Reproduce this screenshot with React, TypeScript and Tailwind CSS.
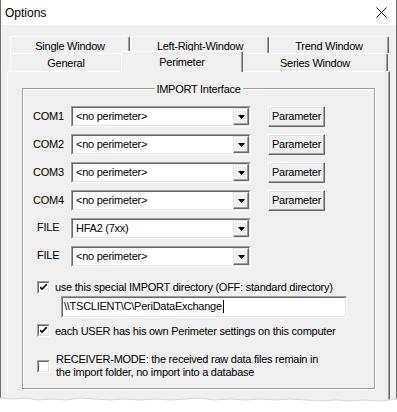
import React from "react"

const ui = "font-['Liberation_Sans',Arial,sans-serif] text-[11px] tracking-[-0.25px] text-black"

function Combo({ value }: { value: string }) {
  return (
    <div className="flex h-[21px] w-[180px] border border-t-[#a0a0a0] border-l-[#a0a0a0] border-r-white border-b-white">
      <div className="flex flex-1 items-stretch border border-t-[#696969] border-l-[#696969] border-r-[#e3e3e3] border-b-[#e3e3e3] bg-white">
        <span className="flex flex-1 items-center pl-[3px] whitespace-nowrap">{value}</span>
        <div className="flex w-[16px] items-center justify-center border border-t-[#e3e3e3] border-l-[#e3e3e3] border-r-[#696969] border-b-[#696969] bg-[#f0f0f0] shadow-[inset_-1px_-1px_0_#a0a0a0,inset_1px_1px_0_white]">
          <svg width="7" height="4" viewBox="0 0 7 4">
            <polygon points="0,0 7,0 3.5,4" fill="black" />
          </svg>
        </div>
      </div>
    </div>
  )
}

function ParamButton() {
  return (
    <div className="ml-[17px] flex h-[21px] w-[57px] items-center justify-center border border-t-white border-l-white border-r-[#696969] border-b-[#696969] bg-[#f0f0f0] shadow-[inset_-1px_-1px_0_#a0a0a0,inset_1px_1px_0_#e3e3e3]">
      Parameter
    </div>
  )
}

function CheckBox({ checked }: { checked: boolean }) {
  return (
    <div className="flex h-[13px] w-[13px] shrink-0 border border-t-[#a0a0a0] border-l-[#a0a0a0] border-r-white border-b-white">
      <div className="flex flex-1 items-center justify-center border border-t-[#696969] border-l-[#696969] border-r-[#e3e3e3] border-b-[#e3e3e3] bg-white">
        {checked && (
          <svg width="7" height="7" viewBox="0 0 7 7">
            <polyline points="0,3 2,5 7,0" fill="none" stroke="black" strokeWidth="1.6" />
          </svg>
        )}
      </div>
    </div>
  )
}

function ComRow({ label }: { label: string }) {
  return (
    <div className="flex h-[21px] items-center">
      <span className="w-[38px]">{label}</span>
      <Combo value="<no perimeter>" />
      <ParamButton />
    </div>
  )
}

function FileRow({ value }: { value: string }) {
  return (
    <div className="flex h-[21px] items-center">
      <span className="w-[38px] pl-[4px] pb-[3px]">FILE</span>
      <Combo value={value} />
    </div>
  )
}

function TabBack({ label, className }: { label: string; className: string }) {
  return (
    <div
      className={`flex h-[17px] items-start justify-center rounded-t-[2px] border-t border-l border-r border-t-white border-l-white border-r-[#696969] pt-[1px] shadow-[inset_-1px_0_0_#a0a0a0] ${className}`}
    >
      {label}
    </div>
  )
}

export default function App() {
  return (
    <div className={`relative h-[412px] w-[397px] overflow-hidden bg-white ${ui}`}>
      <div className="flex h-full flex-col border-x border-x-[#6e6e6e]">
        {/* title bar */}
        <div className="flex h-[25px] items-center justify-between bg-white pl-[4px] pr-[9px]">
          <span className="text-[12px] tracking-normal">Options</span>
          <svg width="11" height="11" viewBox="0 0 11 11">
            <path d="M0.5 0.5 L10.5 10.5 M10.5 0.5 L0.5 10.5" stroke="black" strokeWidth="1" />
          </svg>
        </div>

        <div className="flex flex-1 flex-col bg-[#f0f0f0] pt-[11px]">
          {/* tabs, back row */}
          <div className="flex pl-[9px]">
            <TabBack label="Single Window" className="w-[120px]" />
            <TabBack label="Left-Right-Window" className="ml-[1px] w-[138px]" />
            <TabBack label="Trend Window" className="w-[120px]" />
          </div>
          {/* tabs, front row */}
          <div className="flex items-start pl-[9px]">
            <div className="flex h-[18px] w-[111px] items-center justify-center rounded-tl-[2px] border-t border-l border-t-white border-l-white pt-[2px]">
              General
            </div>
            <div className="relative z-10 -mt-[2px] -mb-[1px] flex h-[21px] w-[122px] items-start justify-center rounded-t-[2px] border-t border-l border-r border-t-white border-l-white border-r-[#696969] bg-[#f0f0f0] pt-[2px] shadow-[inset_-1px_0_0_#a0a0a0]">
              Perimeter
            </div>
            <div className="flex h-[18px] w-[145px] items-center justify-center rounded-tr-[2px] border-t border-r border-t-white border-r-[#696969] pt-[2px] shadow-[inset_-1px_0_0_#a0a0a0]">
              Series Window
            </div>
          </div>

          {/* panel */}
          <div className="ml-[6px] flex w-[383px] flex-1 flex-col border-t border-l border-r border-t-white border-l-white border-r-[#696969] shadow-[inset_-1px_0_0_#a0a0a0]">
            <div className="relative ml-[14px] mt-[16px] h-[301px] w-[353px] border border-[#a0a0a0] shadow-[inset_1px_1px_0_white,1px_1px_0_white]">
              <span className="absolute -top-[8px] left-1/2 -translate-x-1/2 bg-[#f0f0f0] px-[2px] whitespace-nowrap">
                IMPORT Interface
              </span>

              <div className="flex flex-col pl-[10px] pt-[17px]">
                <div className="flex flex-col gap-[7px]">
                  <ComRow label="COM1" />
                  <ComRow label="COM2" />
                  <ComRow label="COM3" />
                  <ComRow label="COM4" />
                  <FileRow value="HFA2 (7xx)" />
                  <FileRow value="<no perimeter>" />
                </div>

                <div className="mt-[12px] flex items-center gap-[5px] pl-[4px]">
                  <CheckBox checked />
                  <span className="whitespace-nowrap">use this special IMPORT directory (OFF: standard directory)</span>
                </div>
                <div className="ml-[28px] flex h-[22px] w-[286px] border border-t-[#a0a0a0] border-l-[#a0a0a0] border-r-white border-b-white">
                  <div className="flex flex-1 items-center border border-t-[#696969] border-l-[#696969] border-r-[#e3e3e3] border-b-[#e3e3e3] bg-white pl-[1px]">
                    <span className="whitespace-nowrap">{"\\\\TSCLIENT\\C\\PeriDataExchange"}</span>
                    <span className="ml-[1px] h-[13px] w-px bg-black" />
                  </div>
                </div>

                <div className="mt-[5px] flex items-center gap-[5px] pl-[4px]">
                  <CheckBox checked />
                  <span className="whitespace-nowrap">each USER has his own Perimeter settings on this computer</span>
                </div>

                <div className="mt-[14px] flex items-center gap-[6px] pl-[4px]">
                  <CheckBox checked={false} />
                  <span className="leading-[13px] whitespace-nowrap">
                    RECEIVER-MODE: the received raw data files remain in
                    <br />
                    the import folder, no import into a database
                  </span>
                </div>
              </div>
            </div>
          </div>
        </div>
      </div>

      {/* torn bottom edge */}
      <svg className="absolute bottom-0 left-0" width="397" height="18" viewBox="0 0 397 18">
        <polygon
          points="0,4 12,5 25,4 38,6 52,5 66,6 80,4 95,5 110,6 124,5 140,6 156,5 170,6 186,5 200,4 214,6 230,5 246,6 260,5 276,6 290,5 306,6 320,7 336,6 350,7 364,6 380,7 397,5 397,18 0,18"
          fill="white"
        />
        <polyline
          points="0,4 12,5 25,4 38,6 52,5 66,6 80,4 95,5 110,6 124,5 140,6 156,5 170,6 186,5 200,4 214,6 230,5 246,6 260,5 276,6 290,5 306,6 320,7 336,6 350,7 364,6 380,7 397,5"
          fill="none"
          stroke="#d8d8d8"
          strokeWidth="1"
        />
      </svg>
    </div>
  )
}
